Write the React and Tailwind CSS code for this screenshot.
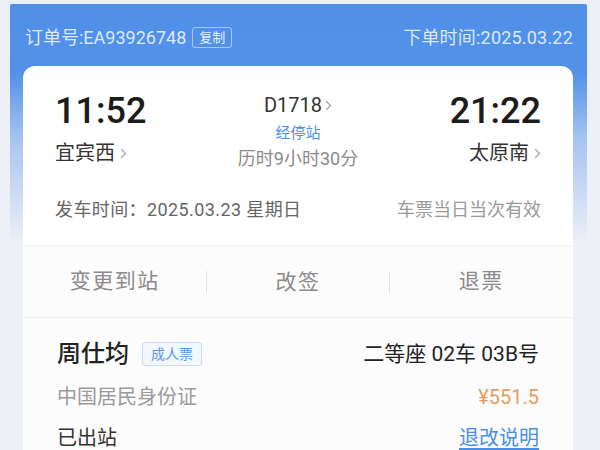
import React from 'react';

const font = "font-['Roboto','Noto_Sans_CJK_SC',sans-serif]";

function Chevron({ className = '' }) {
    return (
        <svg width="7" height="11" viewBox="0 0 7 11" className={className} fill="none">
            <polyline points="1.5,1.5 5.5,5.5 1.5,9.5" stroke="#a3a3a3" strokeWidth="1.2" strokeLinecap="round" strokeLinejoin="round" />
        </svg>
    );
}

export default function App() {
    return (
        <div className={`w-[600px] h-[450px] overflow-hidden bg-[#eef0f7] pt-[4px] pl-[10px] ${font}`}>
            <div className="w-[577px] h-[460px] rounded-t-[2px] bg-[linear-gradient(to_bottom,#4f8fe8_0px,#5492e9_70px,#a6c4f1_135px,#eef0f7_240px)]">
                {/* Header */}
                <div className="h-[62px] pt-[4px] pl-[15px] pr-[14px] flex items-center justify-between text-[18px] text-[#dde9fb]">
                    <div className="flex items-center">
                        <span>订单号:EA93926748</span>
                        <span className="ml-[6px] h-[21px] px-[6px] flex items-center border border-white/50 rounded-[3px] text-[13px] leading-none text-[#e4eefc]">复制</span>
                    </div>
                    <span className="tracking-[0.2px]">下单时间:2025.03.22</span>
                </div>

                {/* Card */}
                <div className="ml-[13px] w-[550px] bg-white rounded-t-[12px] overflow-hidden">
                    <div className="pt-[25px] pb-[23px] px-[32px]">
                        <div className="flex justify-between">
                            <div className="flex flex-col items-start">
                                <span className="text-[36px] leading-[40px] font-medium text-[#1c1c1c]">11:52</span>
                                <div className="mt-[9px] flex items-center gap-[5px] text-[20px] leading-[26px] text-[#333]">
                                    <span>宜宾西</span>
                                    <Chevron />
                                </div>
                            </div>
                            <div className="flex flex-col items-center pt-[1px]">
                                <div className="flex items-center gap-[3px] text-[20px] leading-[26px] text-[#333]">
                                    <span>D1718</span>
                                    <Chevron />
                                </div>
                                <span className="mt-[5px] text-[15px] leading-[20px] text-[#4a8fe7]">经停站</span>
                                <span className="mt-[4px] text-[18px] leading-[24px] text-[#8a8a8a]">历时9小时30分</span>
                            </div>
                            <div className="flex flex-col items-end">
                                <span className="text-[36px] leading-[40px] font-medium text-[#1c1c1c]">21:22</span>
                                <div className="mt-[9px] flex items-center gap-[5px] text-[20px] leading-[26px] text-[#333]">
                                    <span>太原南</span>
                                    <Chevron />
                                </div>
                            </div>
                        </div>
                        <div className="mt-[27px] flex justify-between text-[18px] leading-[24px]">
                            <span className="text-[#666] tracking-[0.4px]">发车时间：2025.03.23 星期日</span>
                            <span className="text-[#9a9a9a]">车票当日当次有效</span>
                        </div>
                    </div>

                    {/* Actions */}
                    <div className="h-[72px] grid grid-cols-3 items-center bg-[#fcfcfc] border-t border-[#efefef] text-[21px] tracking-[1.5px] text-[#8a8a8a]">
                        <div className="flex justify-center">变更到站</div>
                        <div className="flex justify-center border-l border-r border-[#e2e2e2] leading-[22px]">改签</div>
                        <div className="flex justify-center">退票</div>
                    </div>

                    {/* Passenger */}
                    <div className="pt-[21px] px-[34px] bg-[#fcfcfc] border-t border-[#eeeeee]">
                        <div className="flex items-center justify-between leading-[30px]">
                            <div className="flex items-center">
                                <span className="text-[24px] font-medium text-[#222]">周仕均</span>
                                <span className="ml-[13px] h-[24px] px-[8px] flex items-center border border-[#c9dcf5] bg-[#f3f8fe] rounded-[3px] text-[14px] leading-none text-[#5a97e6]">成人票</span>
                            </div>
                            <span className="text-[21px] text-[#222]">二等座 02车 03B号</span>
                        </div>
                        <div className="mt-[16px] flex items-center justify-between leading-[24px]">
                            <span className="text-[20px] text-[#9b9b9b]">中国居民身份证</span>
                            <span className="text-[20px] text-[#e89b5c]">¥551.5</span>
                        </div>
                        <div className="mt-[16px] flex items-center justify-between leading-[26px]">
                            <span className="text-[20px] text-[#333]">已出站</span>
                            <span className="text-[20px] text-[#4a8fe7] underline underline-offset-[3px]">退改说明</span>
                        </div>
                    </div>
                </div>
            </div>
        </div>
    );
}
